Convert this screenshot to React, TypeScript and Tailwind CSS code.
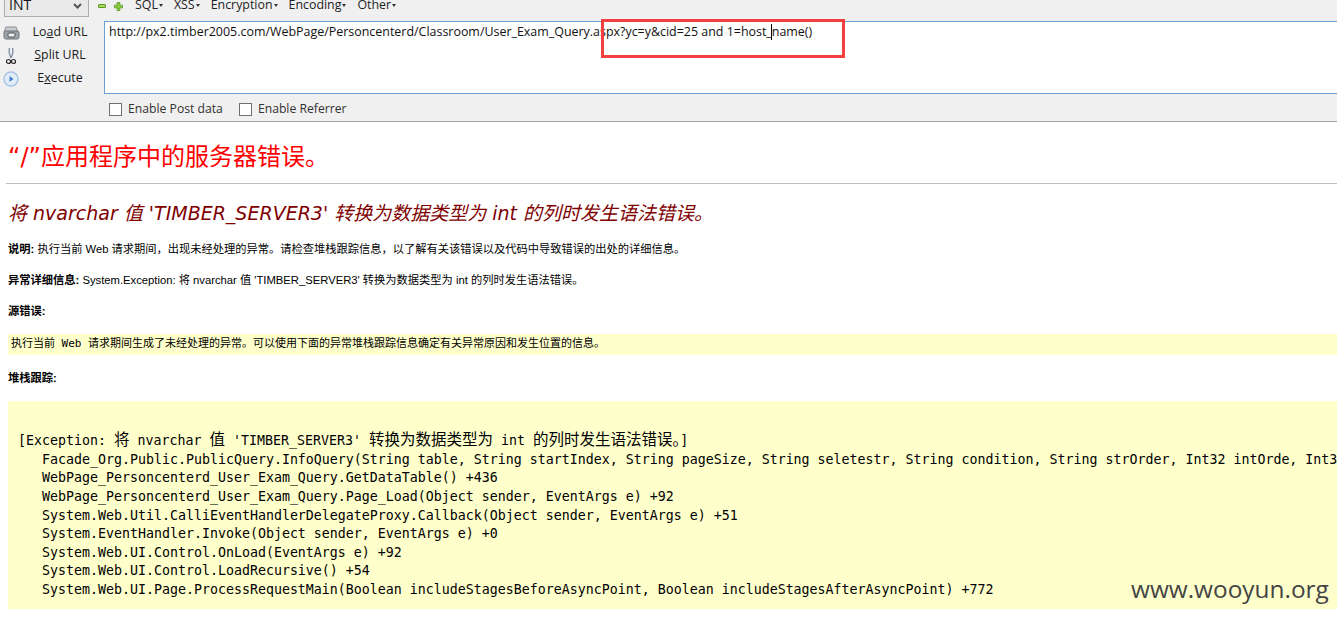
import React from 'react';

const ui = { fontFamily: '"Open Sans", "Noto Sans", sans-serif' };
const verdana = { fontFamily: '"DejaVu Sans", "Noto Sans CJK SC", sans-serif' };
const arial = { fontFamily: '"Liberation Sans", "Noto Sans CJK SC", sans-serif' };
const mono = { fontFamily: '"DejaVu Sans Mono", "Noto Sans CJK SC", monospace' };

const menus = ['SQL', 'XSS', 'Encryption', 'Encoding', 'Other'];

const stackLines = [
  'Facade_Org.Public.PublicQuery.InfoQuery(String table, String startIndex, String pageSize, String seletestr, String condition, String strOrder, Int32 intOrde, Int32 intCount)',
  'WebPage_Personcenterd_User_Exam_Query.GetDataTable() +436',
  'WebPage_Personcenterd_User_Exam_Query.Page_Load(Object sender, EventArgs e) +92',
  'System.Web.Util.CalliEventHandlerDelegateProxy.Callback(Object sender, EventArgs e) +51',
  'System.EventHandler.Invoke(Object sender, EventArgs e) +0',
  'System.Web.UI.Control.OnLoad(EventArgs e) +92',
  'System.Web.UI.Control.LoadRecursive() +54',
  'System.Web.UI.Page.ProcessRequestMain(Boolean includeStagesBeforeAsyncPoint, Boolean includeStagesAfterAsyncPoint) +772',
];

const PrinterIcon = () => (
  <svg width="17" height="14" viewBox="0 0 17 14">
    <path d="M3 1h10l2 5H1z" fill="#c9ccd0" stroke="#8a8f95" />
    <rect x="1" y="5" width="15" height="8" rx="2" fill="#9ea3a8" stroke="#6f7479" />
    <rect x="5" y="7" width="7" height="4" rx="1" fill="#eef0f2" stroke="#4f5458" />
  </svg>
);

const ScissorsIcon = () => (
  <svg width="10" height="18" viewBox="0 0 10 18" fill="none">
    <path d="M3.5 1c-1 4 0 7 1.5 10M6.5 1c1 4 0 7-1.5 10" stroke="#7d8ea5" strokeWidth="1.4" />
    <circle cx="2.5" cy="14.5" r="2" stroke="#222" strokeWidth="1.2" />
    <circle cx="7.5" cy="14.5" r="2" stroke="#222" strokeWidth="1.2" />
  </svg>
);

const PlayIcon = () => (
  <svg width="16" height="16" viewBox="0 0 16 16">
    <circle cx="8" cy="8" r="7" fill="#e3edf9" stroke="#a9c4e4" strokeWidth="1.5" />
    <path d="M6.5 5l4 3-4 3z" fill="#3f7fc9" />
  </svg>
);

const SideButton = ({ icon, children }: { icon: React.ReactNode; children: React.ReactNode }) => (
  <div className="flex h-[23px] items-center">
    <div className="flex w-[22px] justify-center">{icon}</div>
    <div className="w-[76px] text-center text-[12.4px] text-[#1a1a1a]">{children}</div>
  </div>
);

const Check = ({ label }: { label: string }) => (
  <div className="flex items-center gap-[6px]">
    <div className="h-[13px] w-[13px] border border-[#707070] bg-white" />
    <span className="text-[12.2px] text-[#333]">{label}</span>
  </div>
);

const Toolbar = () => (
  <div className="h-[122px] border-b border-[#a0a0a0] bg-[#f0f0f0]" style={ui}>
    <div className="flex h-[20px] items-end">
      <div className="ml-[4px] flex h-[36px] w-[85px] shrink-0 -translate-y-[3px] items-end justify-between border border-[#acacac] bg-[#e9e9e9] px-[4px] pb-[1px] text-[14px] text-[#111]">
        <span>INT</span>
        <svg className="mb-[6px] mr-[2px]" width="9" height="6" viewBox="0 0 9 6" fill="none">
          <path d="M1 1l3.5 3.5L8 1" stroke="#555" strokeWidth="2" />
        </svg>
      </div>
      <div className="ml-[9px] flex h-[17px] w-[26px] items-start gap-[8px]">
        <div className="mt-[1px] h-[4px] w-[8px] rounded-[1px] border border-[#5f9a1c] bg-[#a5d85a]" />
        <svg className="-mt-[1px]" width="9" height="9" viewBox="0 0 10 10">
          <path d="M3.5 .5h3v3h3v3h-3v3h-3v-3h-3v-3h3z" fill="#8ccb3f" stroke="#4f8f16" strokeWidth=".8" />
        </svg>
      </div>
      <div className="ml-[11px] flex h-[20px] gap-[11px] text-[12.4px] leading-[10px] text-[#222]">
        {menus.map((m) => (
          <div key={m} className="flex items-start">
            <span>{m}</span>
            <span className="ml-[1px] mt-[4px] border-x-[2.5px] border-t-[3px] border-x-transparent border-t-[#333]" />
          </div>
        ))}
      </div>
    </div>
    <div className="mt-[1px] flex">
      <div className="w-[104px] shrink-0">
        <SideButton icon={<PrinterIcon />}>
          Lo<span className="underline">a</span>d URL
        </SideButton>
        <SideButton icon={<ScissorsIcon />}>
          <span className="underline">S</span>plit URL
        </SideButton>
        <SideButton icon={<PlayIcon />}>
          E<span className="underline">x</span>ecute
        </SideButton>
      </div>
      <div className="h-[73px] flex-1 border-y border-l border-[#6a9fd8] bg-white pl-[4px] pt-[1px] text-[12.45px] leading-[18px] text-[#111]">
        http://px2.timber2005.com/WebPage/Personcenterd/Classroom/User_Exam_Query.aspx?yc=y&amp;cid=25 and 1=host_name()
      </div>
    </div>
    <div className="ml-[109px] mt-[6px] flex gap-[16px]">
      <Check label="Enable Post data" />
      <Check label="Enable Referrer" />
    </div>
  </div>
);

const Label = ({ children }: { children: React.ReactNode }) => (
  <b className="font-bold text-black">{children}</b>
);

const Wide = ({ children }: { children: React.ReactNode }) => (
  <span className="text-[15.5px]">{children}</span>
);

export default function App() {
  return (
    <div className="relative h-screen overflow-hidden bg-white">
      <Toolbar />
      <div className="px-[8px] text-black" style={verdana}>
        <h1 className="mt-[17px] whitespace-nowrap text-[24px] leading-[36px] font-normal text-[#ff0000]">
          “/”应用程序中的服务器错误。
        </h1>
        <hr className="-ml-[2px] -mr-[8px] mt-[8px] border-t border-[#c0c0c0]" />
        <h2 className="mt-[15px] whitespace-nowrap text-[19px] leading-[28px] font-normal italic text-[#800000]">
          将 nvarchar 值 'TIMBER_SERVER3' 转换为数据类型为 int 的列时发生语法错误。
        </h2>
        <div style={arial}>
          <p className="mt-[14px] whitespace-nowrap text-[11.25px] leading-[16px]">
            <Label>说明:</Label> 执行当前 Web 请求期间，出现未经处理的异常。请检查堆栈跟踪信息，以了解有关该错误以及代码中导致错误的出处的详细信息。
          </p>
          <p className="mt-[15px] whitespace-nowrap text-[11.25px] leading-[16px]">
            <Label>异常详细信息:</Label> System.Exception: 将 nvarchar 值 'TIMBER_SERVER3' 转换为数据类型为 int 的列时发生语法错误。
          </p>
          <p className="mt-[15px] text-[11.25px] leading-[16px]">
            <Label>源错误:</Label>
          </p>
        </div>
        <div className="-mr-[8px] mt-[15px] h-[21px] whitespace-nowrap bg-[#ffffcc] pl-[3px] text-[11px] leading-[20px]" style={mono}>
          执行当前 Web 请求期间生成了未经处理的异常。可以使用下面的异常堆栈跟踪信息确定有关异常原因和发生位置的信息。
        </div>
        <p className="mt-[15px] text-[11.25px] leading-[16px]" style={arial}>
          <Label>堆栈跟踪:</Label>
        </p>
        <div className="-mr-[8px] mt-[15px] h-[208px] overflow-hidden bg-[#ffffcc] pl-[10px] pt-[30px] text-[13.29px] leading-[18.625px]" style={mono}>
          <div className="whitespace-nowrap">
            [Exception: <Wide>将</Wide> nvarchar <Wide>值</Wide> 'TIMBER_SERVER3' <Wide>转换为数据类型为</Wide> int <Wide>的列时发生语法错误。</Wide>]
          </div>
          {stackLines.map((line) => (
            <div key={line} className="whitespace-nowrap pl-[24px]">
              {line}
            </div>
          ))}
        </div>
      </div>
      {/* annotation and watermark sit on top of the screenshot */}
      <div className="absolute left-[601px] top-[19px] h-[39px] w-[244px] border-[3px] border-[#f24040]" />
      <div className="absolute left-[771px] top-[24px] h-[16px] w-[1px] bg-black" />
      <div className="absolute left-[1131px] top-[573px] text-[24.4px] leading-[32px] text-[#444]" style={{ fontFamily: '"Open Sans", sans-serif' }}>
        www.wooyun.org
      </div>
    </div>
  );
}
